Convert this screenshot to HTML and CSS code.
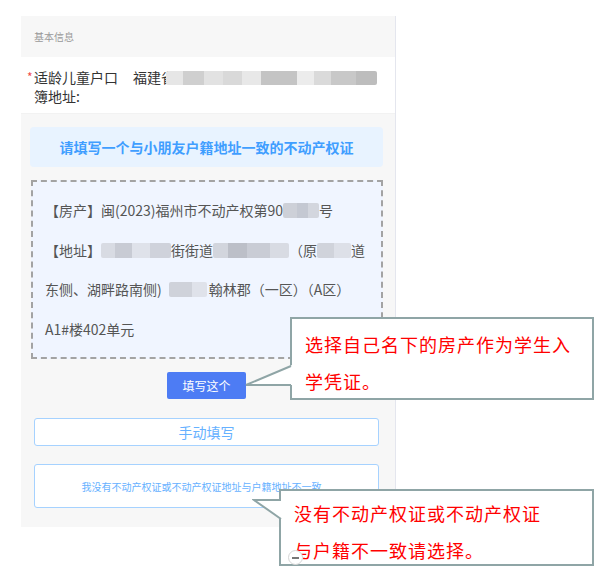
FILE: index.html
```html
<!DOCTYPE html>
<html lang="zh">
<head>
    <meta charset="UTF-8">
    <meta name="viewport" content="width=device-width, initial-scale=1.0">
    <title>基本信息</title>
    <link rel="stylesheet" href="styles.css">
</head>
<body>
    <div class="stage">
        <div class="phone">
            <div class="section-title">基本信息</div>
            <div class="info-row">
                <span class="required">*</span>
                <span class="info-label">适龄儿童户口簿地址:</span>
                <span class="info-value">福建省<span class="blur blur-addr"></span></span>
            </div>

            <div class="content">
                <div class="banner">请填写一个与小朋友户籍地址一致的不动产权证</div>
                <div class="house">
                    <p>【房产】闽(2023)福州市不动产权第90<span class="blur blur-no"></span>号</p>
                    <p>【地址】<span class="blur blur-a"></span>街街道<span class="blur blur-b"></span>（原<span class="blur blur-c"></span>道</p>
                    <p>东侧、湖畔路南侧)<span class="blur blur-d"></span>翰林郡（一区）（A区）</p>
                    <p>A1#楼402单元</p>
                </div>
                <button class="pick-btn">填写这个</button>
                <button class="manual-btn">手动填写</button>
                <button class="none-btn">我没有不动产权证或不动产权证地址与户籍地址不一致</button>
            </div>
        </div>

        <!-- callouts over the screenshot -->
        <div class="callout callout-pick">选择自己名下的房产作为学生入<br>学凭证。</div>
        <svg class="tail tail-pick" width="52" height="24" viewBox="0 0 52 24">
            <polygon points="48,0 2,20 48,20" fill="#fff"/>
            <polyline points="47,1 2,20 47,20" fill="none" stroke="#8fa5a6" stroke-width="2"/>
        </svg>
        <div class="callout callout-none">没有不动产权证或不动产权证<br>与户籍不一致请选择。</div>
        <svg class="tail tail-none" width="32" height="22" viewBox="0 0 32 22">
            <polygon points="2,1 30,1 30,20" fill="#fff"/>
            <polyline points="29,1 2,1 29,20" fill="none" stroke="#8fa5a6" stroke-width="2"/>
        </svg>
        <div class="zoom-dot"></div>
    </div>
</body>
</html>
```

FILE: styles.css
```css
body {
    margin: 0;
    background-color: #fff;
    font-family: "Noto Sans CJK SC", "Noto Sans", sans-serif;
}
.stage {
    position: relative;
    width: 610px;
    height: 567px;
    overflow: hidden;
}
.phone {
    margin: 16px 0 0 21px;
    width: 374px;
    height: 511px;
    background-color: #f7f7f7;
    border-right: 1px solid #e4e6ee;
}
.section-title {
    height: 41px;
    line-height: 41px;
    padding-left: 13px;
    font-size: 10px;
    color: #999;
}
.info-row {
    display: flex;
    height: 57px;
    box-sizing: border-box;
    padding: 11px 13px 0 6px;
    background-color: #fff;
    border-bottom: 1px solid #f2f2f2;
    font-size: 14px;
    line-height: 19px;
    color: #333;
}
.required {
    width: 7px;
    color: #f04b4b;
    font-size: 12px;
    line-height: 17px;
}
.info-label {
    width: 90px;
    margin-right: 9px;
}
.info-value {
    white-space: nowrap;
}
.blur {
    display: inline-block;
    height: 15px;
    vertical-align: -2px;
    border-radius: 2px;
}
.blur-addr {
    width: 211px;
    height: 14px;
    margin-left: -9px;
    background: linear-gradient(90deg, #e6e6e6 0 8%, #cfcfcf 8% 18%, #e2e2e2 18% 27%, #d9d9d9 27% 36%, #e8e8e8 36% 45%, #c4c4c4 45% 62%, #ececec 62% 70%, #dadada 70% 78%, #c8c8c8 78% 90%, #bdbdbd 90% 100%);
}
.content {
    padding: 13px 12px 0 9px;
}
.banner {
    height: 40px;
    line-height: 40px;
    border-radius: 4px;
    background-color: #e8f3ff;
    color: #409eff;
    font-size: 14px;
    font-weight: bold;
    text-align: center;
}
.house {
    margin: 13px 0 0 1px;
    height: 179px;
    box-sizing: border-box;
    padding: 9px 8px 0 12px;
    border: 2px dashed #a3a3a3;
    background-color: #f0f5ff;
    font-size: 14px;
    color: #555;
    white-space: nowrap;
}
.house p {
    margin: 0;
    line-height: 39.5px;
}
.blur-no {
    width: 36px;
    background: linear-gradient(90deg, #cdd0d8 0 40%, #c4c8d2 40% 70%, #d3d6de 70% 100%);
}
.blur-a {
    width: 70px;
    background: linear-gradient(90deg, #d8dbe3 0 20%, #c8cbd4 20% 45%, #dfe2ea 45% 70%, #cfd2db 70% 100%);
}
.blur-b {
    width: 76px;
    background: linear-gradient(90deg, #d2d5dd 0 20%, #bcbfc8 20% 45%, #c9ccd5 45% 75%, #d8dbe3 75% 100%);
}
.blur-c {
    width: 34px;
    background: linear-gradient(90deg, #d0d3db 0 50%, #dde0e8 50% 100%);
}
.blur-d {
    width: 38px;
    margin: 0 2px 0 7px;
    background: linear-gradient(90deg, #cfd2da 0 60%, #dfe2ea 60% 100%);
}
.pick-btn {
    display: block;
    margin: 13px auto 0;
    width: 79px;
    height: 27px;
    padding: 0;
    border: none;
    border-radius: 2px;
    background-color: #4d7cf4;
    color: #fff;
    font-family: inherit;
    font-size: 12px;
}
.manual-btn,
.none-btn {
    display: block;
    width: 345px;
    margin-left: 4px;
    padding: 0;
    border: 1px solid #a6d2ff;
    border-radius: 3px;
    background-color: #fff;
    color: #66b1ff;
    font-family: inherit;
}
.manual-btn {
    margin-top: 19px;
    height: 28px;
    font-size: 14px;
}
.none-btn {
    margin-top: 18px;
    height: 44px;
    padding-right: 10px;
    font-size: 10px;
}
.callout {
    position: absolute;
    box-sizing: border-box;
    border: 2px solid #8fa5a6;
    background-color: #fff;
    padding-left: 13px;
    color: #f00;
    font-size: 18px;
    letter-spacing: 1px;
    line-height: 37px;
}
.callout-pick {
    left: 290px;
    top: 317px;
    width: 304px;
    height: 83px;
    padding-top: 7px;
}
.callout-none {
    left: 279px;
    top: 489px;
    width: 315px;
    height: 77px;
    padding-top: 4px;
}
.tail {
    position: absolute;
}
.tail-pick {
    left: 244px;
    top: 365px;
}
.tail-none {
    left: 252px;
    top: 499px;
}
.zoom-dot {
    position: absolute;
    left: 288px;
    top: 550px;
    width: 13px;
    height: 13px;
    border: 1px solid #d6d6d6;
    border-radius: 50%;
    background-color: #fff;
}
.zoom-dot:after {
    content: "";
    position: absolute;
    left: 3px;
    top: 6px;
    width: 7px;
    height: 2px;
    background-color: #777;
}
```
